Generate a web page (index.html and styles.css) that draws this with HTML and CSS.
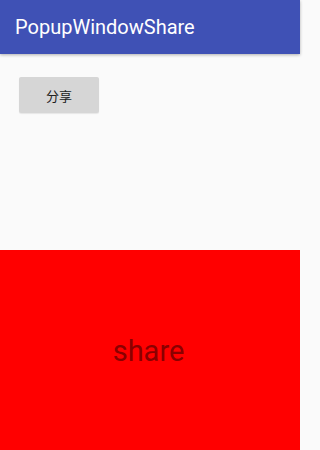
FILE: index.html
```html
<!DOCTYPE html>
<html>
<head>
<meta charset="utf-8">
<link rel="stylesheet" href="styles.css">
</head>
<body>
<div class="app">
  <header class="toolbar"><span class="title">PopupWindowShare</span></header>
  <main class="content">
    <button class="btn">分享</button>
  </main>
  <div class="popup"><span class="share">share</span></div>
</div>
</body>
</html>
```
FILE: styles.css
```css
html, body { margin: 0; padding: 0; background: #fafafa; }
body { height: 450px; overflow: hidden; font-family: Roboto, "Noto Sans CJK SC", sans-serif; }
.app { display: flex; flex-direction: column; height: 450px; width: 300px; }
.toolbar { height: 54px; background: #3f51b5; display: flex; align-items: center; padding-left: 15px; box-shadow: 0 1px 3px rgba(0,0,0,0.3); position: relative; z-index: 1; flex-shrink: 0; }
.title { color: #fff; font-size: 20px; }
.content { flex: 1; padding: 23px 0 0 19px; }
.btn { width: 80px; height: 36px; background: #d6d6d6; border: none; border-radius: 2px; font-family: Roboto, "Noto Sans CJK SC", sans-serif; font-size: 13px; color: #222; padding: 0; box-shadow: 0 1px 1px rgba(0,0,0,0.08); }
.popup { height: 200px; background: #ff0000; display: flex; align-items: flex-end; justify-content: center; flex-shrink: 0; }
.share { font-size: 29px; color: #8a0000; margin-bottom: 82px; padding-right: 3px; }
```
